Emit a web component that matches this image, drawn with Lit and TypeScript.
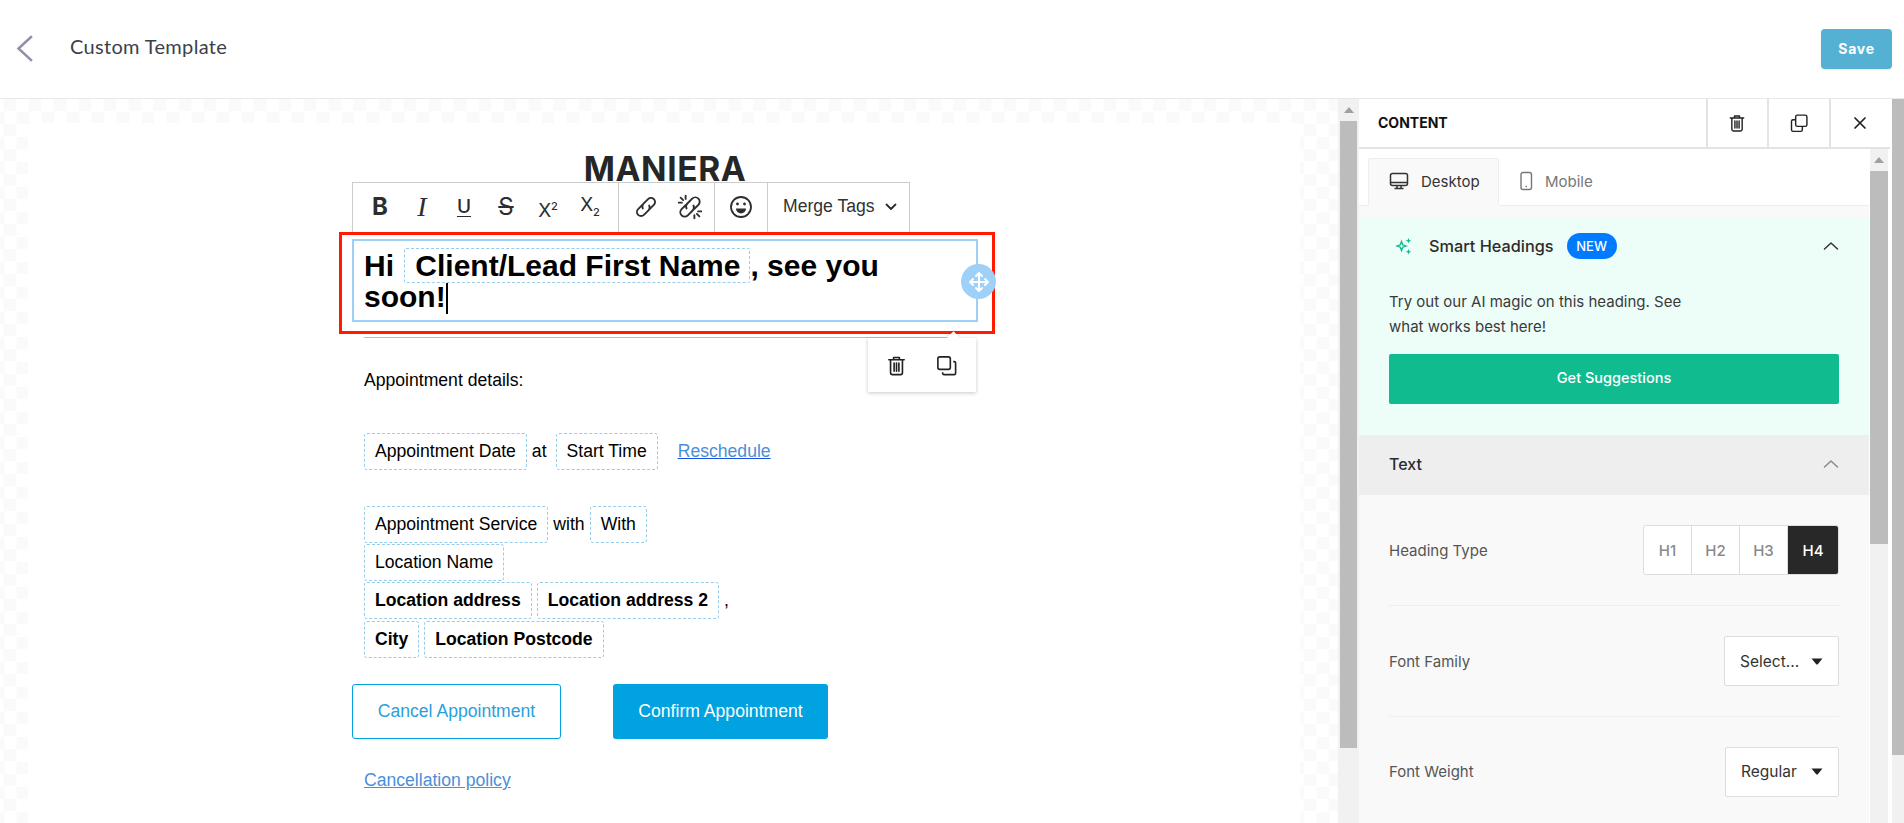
import { LitElement, html, css, svg } from "lit";
import { customElement } from "lit/decorators.js";

const trash = (s = 22) => html`<svg width=${s} height=${s} viewBox="0 0 24 24" fill="none" stroke="#222" stroke-width="1.7" stroke-linecap="round" stroke-linejoin="round"><path d="M4 6h16M9 6V3.6h6V6M5.8 6v13.5a2 2 0 0 0 2 2h8.4a2 2 0 0 0 2-2V6M9.5 9.5v8.5M12 9.5v8.5M14.500 9.500v8.500"/></svg>`;
const copyDown = (s = 22) => html`<svg width=${s} height=${s} viewBox="0 0 24 24" fill="none" stroke="#222" stroke-width="1.7" stroke-linejoin="round"><rect x="3" y="3" width="13" height="13" rx="2"/><path d="M19 8h1a1.500 1.500 0 0 1 1.500 1.500V20a1.500 1.500 0 0 1-1.500 1.500H9.500A1.500 1.500 0 0 1 8 20v-1"/></svg>`;
const copyUp = (s = 22) => html`<svg width=${s} height=${s} viewBox="0 0 24 24" fill="none" stroke="#222" stroke-width="1.7" stroke-linejoin="round"><rect x="8" y="2.500" width="13.500" height="13.500" rx="2"/><path d="M8 8H5a2 2 0 0 0-2 2v10a2 2 0 0 0 2 2h9a2 2 0 0 0 2-2v-4"/></svg>`;
const chevUp = (c: string) => html`<svg width="16" height="10" viewBox="0 0 16 10" fill="none" stroke=${c} stroke-width="1.500" stroke-linecap="round" stroke-linejoin="round"><path d="M1.500 8L8 2l6.500 6"/></svg>`;
const caret = html`<svg width="12" height="7" viewBox="0 0 12 7"><path d="M0.500 0.500h11L7 6a1.300 1.300 0 0 1-2 0z" fill="#222"/></svg>`;
const chain = svg`<g transform="rotate(-45 12 12)"><path d="M10.500 8.500H6a3.500 3.500 0 0 0 0 7h5.500a3.500 3.500 0 0 0 3.300-2.400"/><path d="M13.500 15.500H18a3.500 3.500 0 0 0 0-7h-5.500a3.500 3.500 0 0 0-3.300 2.400"/></g>`;

@customElement("app-root")
export class AppRoot extends LitElement {
  static styles = css`
    :host { display: block; width: 1904px; height: 823px; overflow: hidden; background: #fff; font-family: "Liberation Sans", Arial, sans-serif; color: #000; }
    * { box-sizing: border-box; }
    .top { height: 99px; border-bottom: 1px solid #e8e8e8; display: flex; align-items: center; padding: 0 12px 7px 16px; background: #fff; }
    .back { width: 17px; height: 27px; margin: 6px 37px 0 0; display: block; }
    .title { font: 400 20px/24px Lato, sans-serif; color: #3b3f4c; flex: 1; letter-spacing: .33px; }
    .save { width: 71px; height: 40px; margin-top: 7px; background: #55b1d3; color: #fff; border-radius: 4px; font: 700 14px/40px Inter, sans-serif; text-align: center; letter-spacing: .7px; box-shadow: 0 1px 2px rgba(0,0,0,.08); }
    .main { display: flex; height: 724px; }
    .canvas { width: 1338px; height: 100%; overflow: hidden; background: conic-gradient(#fafafa 25%, #fff 0 50%, #fafafa 0 75%, #fff 0) -8.5px 0 / 25px 25px; padding: 24px 38px 0 28px; }
    .sheet { background: #fff; height: 100%; padding: 32px 0 0 324px; position: relative; }
    .col { width: 626px; position: relative; }
    .logo { height: 27px; text-align: center; font: 700 33.500px/29px Inter, sans-serif; color: #262626; letter-spacing: .6px; }
    .tb { height: 50px; width: 558px; border: 1px solid #ccc; border-bottom: 0; display: flex; background: #fff; align-items: stretch; color: #333; position: relative; }
    .grp { display: flex; align-items: center; border-right: 1px solid #ccc; padding-bottom: 2px; }
    .grp.a { padding-left: 6px; width: 266px; }
    .grp.b { width: 96px; padding-left: 6px; gap: 2px; }
    .grp.c { width: 53px; justify-content: center; }
    .grp.d { flex: 1; border: 0; padding-left: 15px; font-size: 17.6px; gap: 10px; color: #333; }
    .t { width: 42px; height: 40px; display: flex; align-items: center; justify-content: center; font: 400 24px/1 Inter, sans-serif; color: #2d2d2d; }
    .t.bold { font-weight: 700; }
    .t.it { font: italic 400 28px/1 "Liberation Serif", serif; }
    .t.un { text-decoration: underline; font-size: 19px; font-weight: 500; text-underline-offset: 3px; }
    .t.st { text-decoration: line-through; text-decoration-thickness: 1.500px; }
    .t.up { padding-top: 7px; font-size: 19px; }
    .t.dn { padding-bottom: 5px; font-size: 19px; }
    .t sup, .t sub { font-size: 11px; line-height: 0; font-weight: 500; }
    .ic { width: 42px; display: flex; justify-content: center; }
    .editor { margin-top: 7px; height: 83px; border: 2px solid #9ecff5; padding: 9px 10px; font: 700 30px/31px "Liberation Sans", Arial, sans-serif; }
    .hchip { border: 1px dashed #97cdea; border-radius: 2px; padding: 0 9px 0 10px; margin: 0 0 0 2px; }
    .cursor { display: inline-block; width: 2px; height: 31px; background: #000; vertical-align: -7px; }
    .hr { margin: 15px 0 0 12px; width: 594px; height: 1px; background: #bbb; }
    .p { margin: 30px 0 0 12px; font-size: 17.6px; line-height: 24px; }
    .row { display: flex; align-items: center; margin: 1px 0 0 12px; height: 37px; font-size: 17.6px; }
    .chip { height: 37px; display: flex; align-items: center; padding: 0 10px; border: 1px dashed #97cdea; border-radius: 3px; white-space: nowrap; }
    .b { font-weight: 700; }
    .lnk { color: #4a90d9; text-decoration: underline; text-decoration-color: #1a4fe0; }
    .r1 { margin-top: 41px; }
    .r2 { margin-top: 36px; }
    .r5 { margin-top: 2px; }
    .at { margin: 0 9px 0 5px; }
    .with { margin: 0 5px; }
    .ml5 { margin-left: 5px; }
    .ml20 { margin-left: 20px; }
    .btns { display: flex; margin-top: 26px; gap: 52px; font-size: 17.6px; }
    .btn { height: 55px; display: flex; align-items: center; justify-content: center; border-radius: 3px; }
    .cancel { width: 209px; border: 1px solid #00a2e0; color: #2a9fdc; }
    .confirm { width: 215px; background: #00a2e0; color: #fff; }
    .pol { margin: 29px 0 0 12px; font-size: 17.6px; line-height: 24px; }
    .pol a { color: #4a90d9; text-decoration: underline; }
    .red { position: absolute; left: -13px; top: 77px; width: 656px; height: 102px; border: 3px solid #ff1a00; pointer-events: none; }
    .handle { position: absolute; left: 609px; top: 109px; width: 35px; height: 35px; border-radius: 50%; background: #9fd0f7; display: flex; align-items: center; justify-content: center; }
    .menu { position: absolute; left: 516px; top: 183px; width: 108px; height: 54px; background: #fff; box-shadow: 0 1px 4px rgba(0,0,0,.22); display: flex; align-items: center; justify-content: space-around; padding: 0 4px 0 3px; }
    .menu::before { content: ""; position: absolute; right: 18px; top: -5px; width: 9px; height: 9px; background: #fff; transform: rotate(45deg); box-shadow: -1px -1px 2px rgba(0,0,0,.1); }
    .sb { background: #f1f1f1; display: flex; flex-direction: column; align-items: stretch; flex: none; }
    .sb.l { width: 21px; padding: 0 2px; }
    .arrow { height: 22px; display: flex; align-items: center; justify-content: center; }
    .arrow i { width: 0; height: 0; border: 5px solid transparent; border-top: 0; border-bottom: 6px solid #a0a0a0; }
    .thumb { background: #bcbcbc; }
    .panel { width: 531px; height: 100%; display: flex; flex-direction: column; font-family: Inter, sans-serif; background: #f9f9f9; }
    .phead { height: 50px; flex: none; display: flex; align-items: stretch; background: #fff; border-bottom: 2px solid #e3e3e3; }
    .phead .nm { flex: 1; padding-left: 19px; font: 700 14px/48px Inter, sans-serif; color: #111; }
    .phead .act { width: 61.500px; border-left: 2px solid #e3e3e3; display: flex; align-items: center; justify-content: center; }
    .pbody { flex: 1; display: flex; min-height: 0; background: #fff; }
    .pcontent { width: 510px; flex: none; background: #f9f9f9; overflow: hidden; }
    .tabs { height: 57px; background: #fff; display: flex; padding: 9px 0 0 9px; border-bottom: 1px solid #eee; }
    .tab { display: flex; align-items: center; gap: 12px; height: 48px; padding-bottom: 2px; font-size: 15px; color: #555; }
    .tab.on { width: 131px; background: #f9f9f9; border: 1px solid #eee; border-bottom: 1px solid #f9f9f9; padding-left: 20px; border-radius: 3px 3px 0 0; color: #333; margin-bottom: -1px; }
    .tab.off { padding-left: 20px; color: #777; }
    .smart { margin-top: 11px; height: 218px; background: #edfdf8; padding: 16px 30px 0 30px; }
    .sh { height: 26px; display: flex; align-items: center; }
    .sh svg.sp { margin: 0 16px 0 6px; }
    .sh b { font-size: 16.300px; font-weight: 500; color: #2c2c2c; }
    .new { margin-left: 13px; width: 50px; height: 26px; border-radius: 13px; background: #007bff; color: #fff; font: 500 13px/26px Inter, sans-serif; text-align: center; }
    .sh .sp2 { flex: 1; }
    .sm-p { margin: 30px 0 0; font-size: 15px; line-height: 25px; color: #3a3a3a; width: 310px; }
    .getbtn { margin-top: 15px; height: 50px; background: #10bc8f; border-radius: 2px; color: #fff; font: 500 14.500px/48px Inter, sans-serif; text-align: center; }
    .sec { height: 60px; background: #eee; display: flex; align-items: center; justify-content: space-between; padding: 0 30px 2px; font-size: 16px; font-weight: 500; color: #2c2c2c; }
    .frow { margin: 0 30px; height: 111px; display: flex; align-items: center; justify-content: space-between; border-bottom: 1px solid #eee; font-size: 15px; color: #555; }
    .frow:last-child { border: 0; margin-top: -1px; }
    .seg { display: flex; width: 196px; height: 50px; border: 1px solid #ddd; border-radius: 3px; background: #fff; overflow: hidden; }
    .seg span { flex: 1; display: flex; align-items: center; justify-content: center; border-right: 1px solid #ddd; color: #8a8a8a; font-size: 15px; font-weight: 500; }
    .seg span:last-child { border: 0; background: #282828; color: #fff; flex: none; width: 50px; }
    .sel { height: 50px; background: #fff; border: 1px solid #ddd; border-radius: 2px; display: flex; align-items: center; justify-content: space-between; padding: 0 15px; font-size: 15.500px; color: #333; }
    .sb.i { width: 18px; margin: 0 2px 0 1px; }
    .sb.o { width: 12px; margin-left: 2px; }
  `;

  render() {
    return html`
      <div class="top">
        <svg class="back" viewBox="0 0 17 27" fill="none" stroke="#8f90a6" stroke-width="2.500" stroke-linecap="square"><path d="M15 2L2.500 13.500 15 25"/></svg>
        <div class="title">Custom Template</div>
        <div class="save">Save</div>
      </div>
      <div class="main">
        <div class="canvas">
          <div class="sheet">
            <div class="col">
              <div class="logo">MANIERA</div>
              <div class="tb">
                <div class="grp a">
                  <span class="t bold">B</span><span class="t it">I</span><span class="t un">U</span><span class="t st">S</span><span class="t up"><span>X<sup>2</sup></span></span><span class="t dn"><span>X<sub>2</sub></span></span>
                </div>
                <div class="grp b">
                  <span class="ic"><svg width="28" height="28" viewBox="0 0 24 24" fill="none" stroke="#2d2d2d" stroke-width="1.600" stroke-linecap="round">${chain}</svg></span>
                  <span class="ic"><svg width="30" height="30" viewBox="0 0 24 24" fill="none" stroke="#2d2d2d" stroke-width="1.500" stroke-linecap="round">${chain}<path d="M4.500 4.500l2 2M3 8.500h2.500M8.500 3v2.500M19.500 19.500l-2-2M21 15.500h-2.500M15.500 21v-2.500"/></svg></span>
                </div>
                <div class="grp c"><svg width="24" height="24" viewBox="0 0 24 24" fill="none" stroke="#2d2d2d" stroke-width="1.800"><circle cx="12" cy="12" r="10"/><circle cx="8.500" cy="9" r="1.400" fill="#2d2d2d" stroke="none"/><circle cx="15.500" cy="9" r="1.400" fill="#2d2d2d" stroke="none"/><path d="M7 13.500h10a5 5 0 0 1-10 0z" fill="#2d2d2d" stroke="none"/></svg></div>
                <div class="grp d">Merge Tags <svg width="12" height="8" viewBox="0 0 12 8" fill="none" stroke="#2d2d2d" stroke-width="1.800" stroke-linecap="round" stroke-linejoin="round"><path d="M1.500 1.500L6 6l4.500-4.500"/></svg></div>
              </div>
              <div class="editor">Hi <span class="hchip">Client/Lead First Name</span>, see you soon!<span class="cursor"></span></div>
              <div class="hr"></div>
              <div class="p">Appointment details:</div>
              <div class="row r1"><span class="chip">Appointment Date</span><span class="at">at</span><span class="chip">Start Time</span><span class="lnk ml20">Reschedule</span></div>
              <div class="row r2"><span class="chip">Appointment Service</span><span class="with">with</span><span class="chip">With</span></div>
              <div class="row"><span class="chip">Location Name</span></div>
              <div class="row"><span class="chip b">Location address</span><span class="chip b ml5">Location address 2</span><span class="ml5">,</span></div>
              <div class="row r5"><span class="chip b">City</span><span class="chip b ml5">Location Postcode</span></div>
              <div class="btns"><div class="btn cancel">Cancel Appointment</div><div class="btn confirm">Confirm Appointment</div></div>
              <div class="pol"><a>Cancellation policy</a></div>
              <div class="red"></div>
              <div class="handle"><svg width="24" height="24" viewBox="0 0 24 24" fill="none" stroke="#fff" stroke-width="2" stroke-linecap="round" stroke-linejoin="round"><path d="M12 3v18M3 12h18M9 6l3-3 3 3M9 18l3 3 3-3M6 9l-3 3 3 3M18 9l3 3-3 3"/></svg></div>
              <div class="menu">${trash(23)}${copyDown(23)}</div>
            </div>
          </div>
        </div>
        <div class="sb l"><div class="arrow"><i></i></div><div class="thumb" style="height:627px"></div></div>
        <div class="panel">
          <div class="phead">
            <div class="nm">CONTENT</div>
            <div class="act">${trash(20)}</div>
            <div class="act">${copyUp(20)}</div>
            <div class="act"><svg width="14" height="14" viewBox="0 0 14 14" stroke="#222" stroke-width="1.700" stroke-linecap="round"><path d="M2 2l10 10M12 2L2 12"/></svg></div>
          </div>
          <div class="pbody">
            <div class="pcontent">
              <div class="tabs">
                <div class="tab on"><svg width="20" height="20" viewBox="0 0 20 20" fill="none" stroke="#333" stroke-width="1.500"><rect x="1.500" y="2.500" width="17" height="12" rx="2"/><path d="M1.500 11.500h17M8 14.500v3M12 14.500v3M5.500 17.500h9"/></svg>Desktop</div>
                <div class="tab off"><svg width="14" height="20" viewBox="0 0 14 20" fill="none" stroke="#777" stroke-width="1.400"><rect x="2" y="1.500" width="10.500" height="17" rx="2"/><path d="M6.500 15.500h1.500"/></svg>Mobile</div>
              </div>
              <div class="smart">
                <div class="sh">
                  <svg class="sp" width="18" height="18" viewBox="0 0 18 18" fill="#10bc8f"><path d="M6.500 4.500l1.200 3.300L11 9l-3.300 1.200L6.500 13.500 5.300 10.200 2 9l3.300-1.200z" fill="none" stroke="#10bc8f" stroke-width="1.400"/><path d="M13.500 1l.8 2 2 .8-2 .8-.8 2-.8-2-2-.8 2-.8zM13.500 12l.8 2 2 .8-2 .8-.8 2-.8-2-2-.8 2-.8z"/></svg>
                  <b>Smart Headings</b><span class="new">NEW</span><span class="sp2"></span>${chevUp("#333")}
                </div>
                <p class="sm-p">Try out our AI magic on this heading. See what works best here!</p>
                <div class="getbtn">Get Suggestions</div>
              </div>
              <div class="sec">Text ${chevUp("#8a8a8a")}</div>
              <div class="frow">Heading Type<div class="seg"><span>H1</span><span>H2</span><span>H3</span><span>H4</span></div></div>
              <div class="frow">Font Family<div class="sel" style="width:115px">Select... ${caret}</div></div>
              <div class="frow">Font Weight<div class="sel" style="width:114px">Regular ${caret}</div></div>
            </div>
            <div class="sb i"><div class="arrow"><i></i></div><div class="thumb" style="height:373px"></div></div>
          </div>
        </div>
        <div class="sb o"><div class="thumb" style="height:656px"></div></div>
      </div>
    `;
  }
}
